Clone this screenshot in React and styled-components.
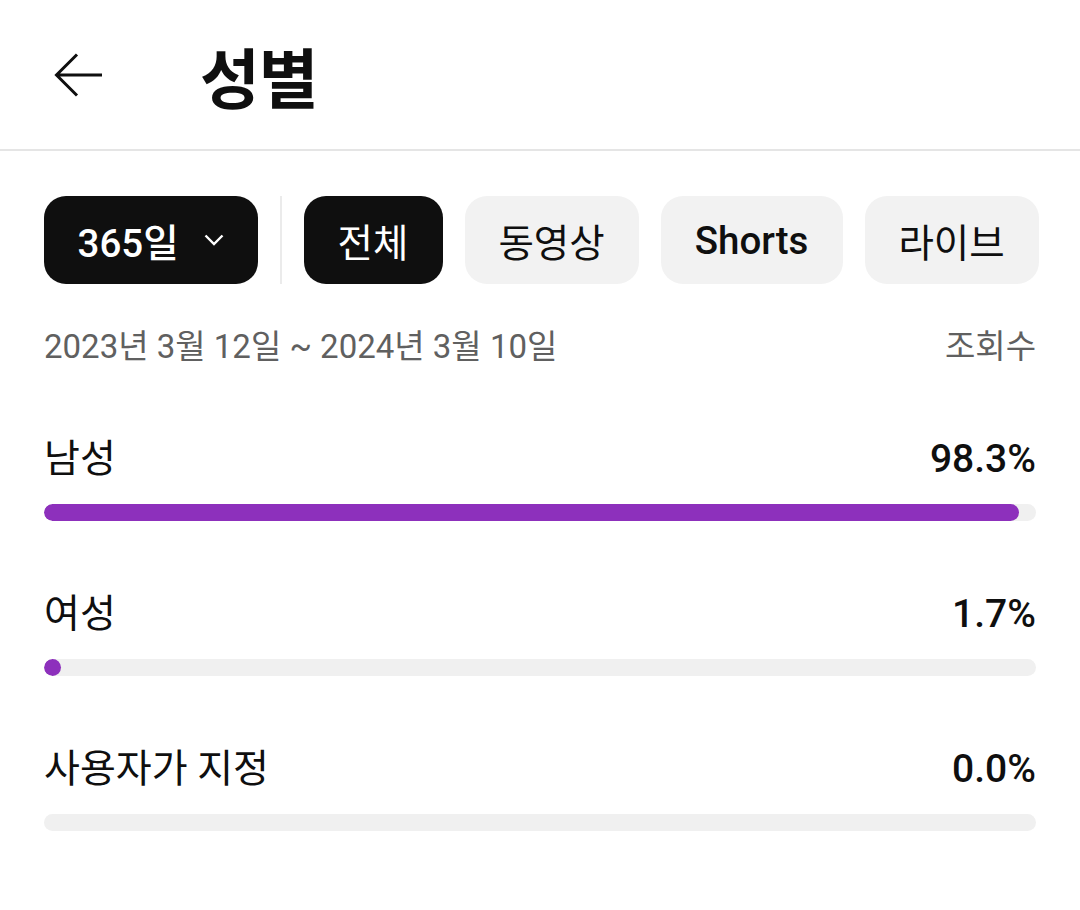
import React from "react";
import styled, { createGlobalStyle } from "styled-components";

const GlobalStyle = createGlobalStyle`
  html, body {
    margin: 0;
    padding: 0;
    background: #ffffff;
  }
  body {
    font-family: Roboto, "Noto Sans CJK KR", sans-serif;
    color: #0f0f0f;
  }
`;

const Page = styled.div`
  width: 1080px;
  min-height: 910px;
  background: #ffffff;
`;

const Header = styled.header`
  display: flex;
  align-items: center;
  border-bottom: 2px solid #e5e5e5;
  box-sizing: border-box;
  height: 151px;
`;

const BackButton = styled.button`
  width: 60px;
  height: 60px;
  margin-left: 49px;
  padding: 0;
  border: none;
  background: none;
  display: flex;
  align-items: center;
  justify-content: center;
`;

const Title = styled.h1`
  margin: 0 0 0 91px;
  font-family: "Noto Sans CJK KR", sans-serif;
  font-size: 65px;
  font-weight: 700;
  color: #0f0f0f;
  letter-spacing: -1px;
`;

const Content = styled.main`
  padding: 45px 44px 0 44px;
`;

const ChipRow = styled.div`
  display: flex;
  align-items: stretch;
  gap: 22px;
  height: 88px;
`;

const Chip = styled.button`
  flex-shrink: 0;
  height: 88px;
  padding: 0 34.5px 0 33.5px;
  border: none;
  border-radius: 22px;
  background: ${(p) => (p.$active ? "#0f0f0f" : "#f2f2f2")};
  color: ${(p) => (p.$active ? "#ffffff" : "#0f0f0f")};
  font-family: Roboto, "Noto Sans CJK KR", sans-serif;
  font-size: 38.5px;
  font-weight: ${(p) => (p.$bold ? 500 : 400)};
  display: flex;
  align-items: center;
  gap: 25px;
  white-space: nowrap;
`;

const Separator = styled.div`
  flex-shrink: 0;
  width: 2px;
  background: #ebebeb;
`;

const DateRow = styled.div`
  margin-top: 43px;
  display: flex;
  justify-content: space-between;
  align-items: center;
  font-size: 33px;
  line-height: 40px;
  color: #606060;
`;

const StatList = styled.div`
  display: flex;
  flex-direction: column;
  gap: 69px;
  margin-top: 68px;
`;

const Stat = styled.div`
  display: flex;
  flex-direction: column;
  gap: 21px;
`;

const StatHead = styled.div`
  display: flex;
  justify-content: space-between;
  align-items: center;
  font-size: 39px;
  line-height: 48px;
  color: #0f0f0f;
`;

const Value = styled.span`
  font-weight: 500;
`;

const Track = styled.div`
  height: 17px;
  border-radius: 9px;
  background: #f0f0f0;
  overflow: hidden;
`;

const Fill = styled.div`
  height: 100%;
  min-width: 17px;
  border-radius: 9px;
  background: #8d30bc;
`;

const stats = [
  { label: "남성", value: "98.3%", pct: 98.3 },
  { label: "여성", value: "1.7%", pct: 1.7 },
  { label: "사용자가 지정", value: "0.0%", pct: 0 },
];

export default function App() {
  return (
    <Page>
      <GlobalStyle />
      <Header>
        <BackButton aria-label="뒤로">
          <svg width="50" height="46" viewBox="0 0 50 46" fill="none">
            <path
              d="M48 23H3M23 2.5L2.5 23L23 43.5"
              stroke="#0f0f0f"
              strokeWidth="3"
              strokeLinecap="butt"
            />
          </svg>
        </BackButton>
        <Title>성별</Title>
      </Header>
      <Content>
        <ChipRow>
          <Chip $active $bold>
            365일
            <svg width="20" height="12" viewBox="0 0 20 12" fill="none">
              <path d="M1.5 1.5L10 10L18.5 1.5" stroke="#ffffff" strokeWidth="2.4" />
            </svg>
          </Chip>
          <Separator />
          <Chip $active>전체</Chip>
          <Chip>동영상</Chip>
          <Chip $bold>Shorts</Chip>
          <Chip>라이브</Chip>
        </ChipRow>
        <DateRow>
          <span>2023년 3월 12일 ~ 2024년 3월 10일</span>
          <span>조회수</span>
        </DateRow>
        <StatList>
          {stats.map((s) => (
            <Stat key={s.label}>
              <StatHead>
                <span>{s.label}</span>
                <Value>{s.value}</Value>
              </StatHead>
              <Track>
                {s.pct > 0 && <Fill style={{ width: `${s.pct}%` }} />}
              </Track>
            </Stat>
          ))}
        </StatList>
      </Content>
    </Page>
  );
}
